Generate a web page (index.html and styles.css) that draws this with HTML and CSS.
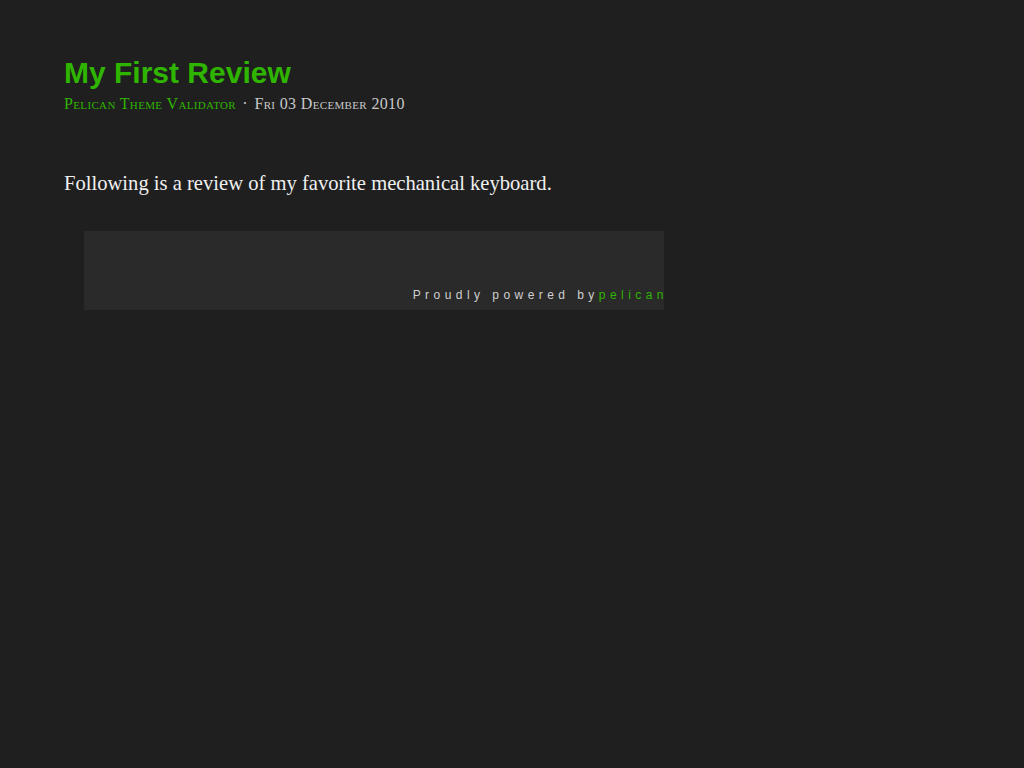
FILE: index.html
```html
<!DOCTYPE html>
<html>
<head>
<meta charset="utf-8">
<link rel="stylesheet" href="styles.css">
</head>
<body>
<div class="page">
  <article class="post">
    <header class="post-header">
      <h1 class="title">My First Review</h1>
      <p class="meta"><a class="cat" href="#">Pelican Theme Validator</a> <span class="sep">·</span> <span class="date">Fri 03 December 2010</span></p>
    </header>
    <div class="content">
      <p>Following is a review of my favorite mechanical keyboard.</p>
    </div>
  </article>
  <footer class="footer">
    <p>Proudly powered by<a href="#">pelican</a></p>
  </footer>
</div>
</body>
</html>
```
FILE: styles.css
```css
html, body {
  margin: 0;
  padding: 0;
  background: #1f1f1f;
}
body {
  color: #e8e8e8;
  font-family: "Liberation Serif", serif;
}
.page {
  padding: 56px 0 0 64px;
  width: 600px;
}
.title {
  margin: 0;
  font-family: "Liberation Sans", Arial, sans-serif;
  font-weight: bold;
  font-size: 30px;
  line-height: 34px;
  color: #2fb500;
}
.meta {
  margin: 3px 0 0;
  font-size: 16px;
  line-height: 21px;
  letter-spacing: 0.35px;
  font-variant: small-caps;
  color: #c9c9c9;
}
.meta a {
  color: #2fb500;
  text-decoration: none;
}
.sep {
  color: #c9c9c9;
  margin: 0 2px;
}
.content {
  margin-top: 55px;
}
.content p {
  margin: 0;
  font-size: 20.6px;
  line-height: 28px;
  color: #f0f0f0;
}
.footer {
  margin: 34px 0 0 20px;
  width: 580px;
  height: 79px;
  background: #2a2a2a;
  display: flex;
  align-items: flex-end;
  justify-content: flex-end;
}
.footer p {
  margin: 0 -4px 8px 0;
  font-family: "Liberation Sans", Arial, sans-serif;
  font-size: 12px;
  letter-spacing: 4.45px;
  color: #cfcfcf;
}
.footer a {
  color: #2fb500;
  text-decoration: none;
}
```
